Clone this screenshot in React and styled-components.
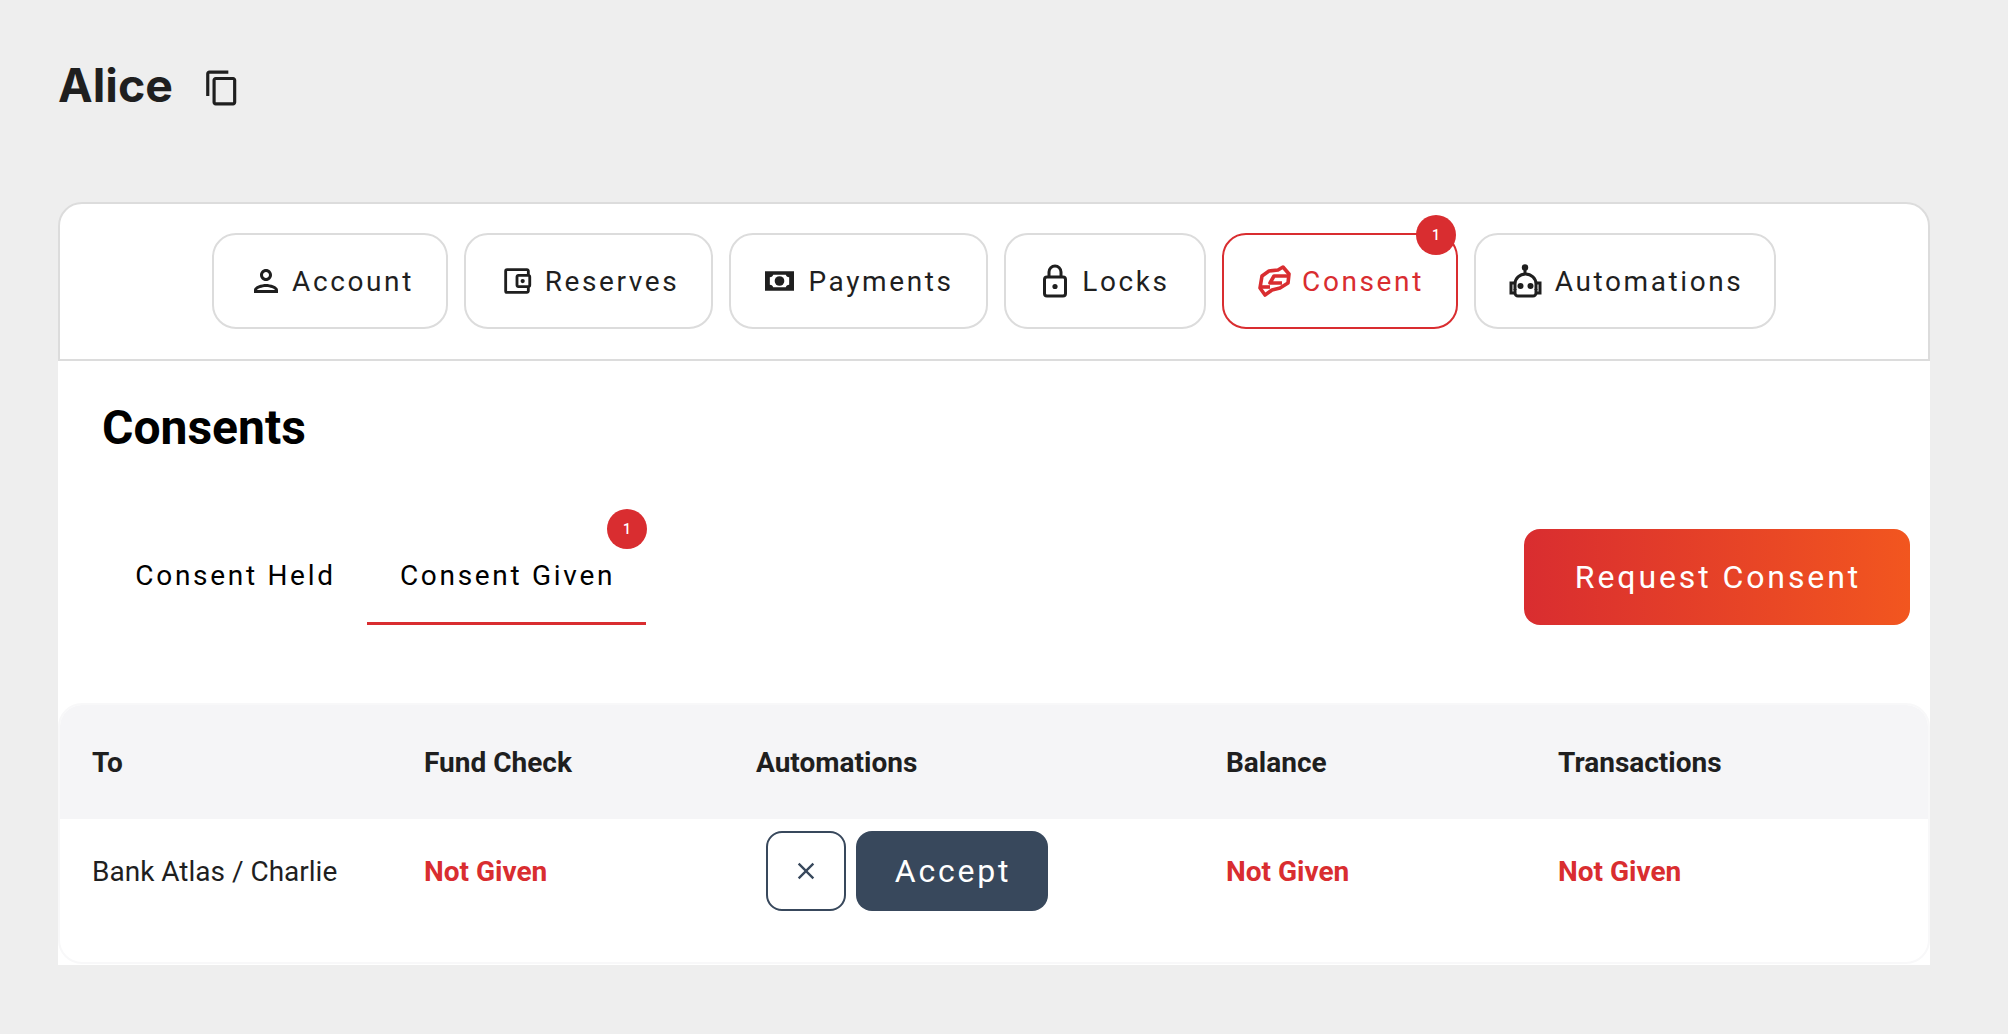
import React from "react";
import styled, { createGlobalStyle } from "styled-components";
import {
  MdOutlineContentCopy,
  MdOutlinePerson,
  MdOutlineAccountBalanceWallet,
  MdClose,
} from "react-icons/md";

const tabs = [
  { label: "Account", icon: <MdOutlinePerson size={36} />, width: 236, gap: 8 },
  { label: "Reserves", icon: <MdOutlineAccountBalanceWallet size={34} />, width: 249, gap: 11 },
  { label: "Payments", icon: <MoneyIcon />, width: 259, gap: 14 },
  { label: "Locks", icon: <LockIcon />, width: 202, gap: 14 },
  { label: "Consent", icon: <HandshakeIcon />, width: 236, gap: 11, active: true, badge: 1 },
  { label: "Automations", icon: <RobotIcon />, width: 302, gap: 12 },
];

function MoneyIcon() {
  return (
    <svg width="29" height="20" viewBox="0 0 30 20">
      <path
        fillRule="evenodd"
        fill="currentColor"
        d="M0 0h30v20H0z M5 6c2 0 3-1 3.500-2.500h13C22 5 23 6 25 6v8c-2 0-3 1-3.500 2.500h-13C8 15 7 14 5 14z"
      />
      <circle cx="15" cy="10" r="5" fill="currentColor" />
    </svg>
  );
}

function LockIcon() {
  return (
    <svg width="26" height="34" viewBox="0 0 26 34" fill="none" stroke="currentColor" strokeWidth="3">
      <rect x="2.500" y="13" width="21" height="19" rx="2.500" />
      <path d="M7 13V8a6 6 0 0 1 12 0v5" />
      <circle cx="13" cy="22.500" r="2.600" fill="currentColor" stroke="none" />
    </svg>
  );
}

function HandshakeIcon() {
  return (
    <svg
      width="33"
      height="33"
      viewBox="0 0 33 33"
      fill="none"
      stroke="currentColor"
      strokeWidth="3.600"
      strokeLinejoin="round"
    >
      <path d="M25 2l6 7-1 9-8 5-8 2-7 5-5-7 2-12 7-5 9-1z" />
      <path d="M30 11H16l-4 7h12" />
      <path d="M3 22h9" />
    </svg>
  );
}

function RobotIcon() {
  return (
    <svg width="34" height="34" viewBox="0 0 34 34" fill="none" stroke="currentColor" strokeWidth="3">
      <circle cx="16" cy="3.500" r="3.200" fill="currentColor" stroke="none" />
      <path d="M16 5v5" />
      <path d="M6 26v-6a10.500 10 0 0 1 21 0v6" />
      <path d="M6 19H2v10h4 M27 19h4v10h-4" />
      <path d="M6 25v4a3 3 0 0 0 3 3h15a3 3 0 0 0 3-3v-4" />
      <circle cx="11.500" cy="22" r="3" fill="currentColor" stroke="none" />
      <circle cx="21.500" cy="22" r="3" fill="currentColor" stroke="none" />
    </svg>
  );
}

function App() {
  return (
    <>
      <GlobalStyle />
      <Page>
        <TitleRow>
          <Title>Alice</Title>
          <CopyIcon size={38} />
        </TitleRow>
        <Card>
          <TabBar>
            {tabs.map((tab) => (
              <TabButton key={tab.label} $active={tab.active} $width={tab.width} $gap={tab.gap}>
                {tab.icon}
                {tab.label}
                {tab.badge && <TabBadge>{tab.badge}</TabBadge>}
              </TabButton>
            ))}
          </TabBar>
          <Content>
            <Heading>Consents</Heading>
            <Toolbar>
              <SubTabs>
                <SubTab $width={265}>Consent Held</SubTab>
                <SubTab $width={279} $active>
                  Consent Given
                  <SubTabBadge>1</SubTabBadge>
                </SubTab>
              </SubTabs>
              <RequestButton>Request Consent</RequestButton>
            </Toolbar>
            <Table>
              <HeadRow>
                <div>To</div>
                <div>Fund Check</div>
                <div>Automations</div>
                <div>Balance</div>
                <div>Transactions</div>
              </HeadRow>
              <BodyRow>
                <div>Bank Atlas / Charlie</div>
                <NotGiven>Not Given</NotGiven>
                <Actions>
                  <CloseButton>
                    <MdClose size={28} />
                  </CloseButton>
                  <AcceptButton>Accept</AcceptButton>
                </Actions>
                <NotGiven>Not Given</NotGiven>
                <NotGiven>Not Given</NotGiven>
              </BodyRow>
            </Table>
          </Content>
        </Card>
      </Page>
    </>
  );
}

export default App;

const GlobalStyle = createGlobalStyle`
  * {
    box-sizing: border-box;
  }
  body {
    margin: 0;
    background: #eeeeee;
    font-family: Roboto, sans-serif;
  }
`;

const Page = styled.div`
  width: 2008px;
  height: 1034px;
  padding: 52px 78px 0 58px;
`;

const TitleRow = styled.div`
  display: flex;
  align-items: center;
  gap: 30px;
  height: 66px;
  color: #1f1f1f;
  margin-bottom: 84px;
`;

const Title = styled.h1`
  margin: 0;
  font-family: Inter, sans-serif;
  font-size: 46.500px;
  font-weight: 700;
  line-height: 66px;
`;

const CopyIcon = styled(MdOutlineContentCopy)`
  margin-top: 6px;
`;

const Card = styled.div`
  width: 1872px;
`;

const TabBar = styled.div`
  display: flex;
  justify-content: center;
  gap: 16px;
  height: 159px;
  padding-top: 29px;
  background: #fff;
  border: 2px solid #dcdcdc;
  border-radius: 24px 24px 0 0;
`;

const TabButton = styled.div`
  position: relative;
  display: flex;
  align-items: center;
  justify-content: center;
  gap: ${(p) => p.$gap}px;
  flex: none;
  width: ${(p) => p.$width}px;
  height: 96px;
  padding-left: 2px;
  border: 2px solid ${(p) => (p.$active ? "#d92d30" : "#dcdcdc")};
  border-radius: 24px;
  color: ${(p) => (p.$active ? "#d92d30" : "#1f1f1f")};
  font-size: 28px;
  letter-spacing: 2.600px;
`;

const TabBadge = styled.span`
  position: absolute;
  top: -20px;
  right: 0;
  display: flex;
  align-items: center;
  justify-content: center;
  width: 40px;
  height: 40px;
  border-radius: 50%;
  background: #d92d30;
  color: #fff;
  font-size: 14px;
  font-weight: 500;
  letter-spacing: 0;
`;

const Content = styled.div`
  height: 604px;
  background: #fff;
  padding-top: 40px;
`;

const Heading = styled.h2`
  margin: 0 0 0 44px;
  font-size: 48px;
  font-weight: 700;
  line-height: 54px;
  color: #000;
`;

const Toolbar = styled.div`
  display: flex;
  justify-content: space-between;
  align-items: flex-end;
  height: 96px;
  margin-top: 74px;
  padding: 0 20px 0 44px;
`;

const SubTabs = styled.div`
  display: flex;
  height: 96px;
  margin-right: auto;
`;

const SubTab = styled.div`
  position: relative;
  display: flex;
  align-items: center;
  justify-content: center;
  width: ${(p) => p.$width}px;
  height: 96px;
  padding-left: 2px;
  color: #000;
  font-size: 28px;
  letter-spacing: 2.700px;
  border-bottom: 3px solid ${(p) => (p.$active ? "#d92d30" : "transparent")};
`;

const SubTabBadge = styled.span`
  position: absolute;
  top: -20px;
  right: -1px;
  display: flex;
  align-items: center;
  justify-content: center;
  width: 40px;
  height: 40px;
  border-radius: 50%;
  background: #d92d30;
  color: #fff;
  font-size: 14px;
  font-weight: 500;
  letter-spacing: 0;
`;

const RequestButton = styled.button`
  width: 386px;
  height: 96px;
  padding: 0 0 0 2px;
  border: 0;
  border-radius: 16px;
  background: linear-gradient(90deg, #d92d30, #f2561f);
  color: #fff;
  font-family: Roboto, sans-serif;
  font-size: 32px;
  letter-spacing: 2.900px;
`;

const Table = styled.div`
  margin-top: 78px;
  height: 261px;
  background: #fff;
  border: 2px solid #f8f8f9;
  border-radius: 24px;
  overflow: hidden;
`;

const columns = "332px 332px 470px 332px 1fr";

const HeadRow = styled.div`
  display: grid;
  grid-template-columns: ${columns};
  align-items: center;
  height: 114px;
  padding-left: 32px;
  background: #f5f5f7;
  color: #1f1f1f;
  font-size: 28px;
  font-weight: 700;
`;

const BodyRow = styled.div`
  display: grid;
  grid-template-columns: ${columns};
  align-items: center;
  height: 104px;
  padding-left: 32px;
  color: #1f1f1f;
  font-size: 28px;
`;

const NotGiven = styled.div`
  color: #d92d30;
  font-weight: 700;
`;

const Actions = styled.div`
  display: flex;
  gap: 10px;
  margin-left: 10px;
`;

const CloseButton = styled.button`
  display: flex;
  align-items: center;
  justify-content: center;
  width: 80px;
  height: 80px;
  padding: 0;
  background: #fff;
  border: 2px solid #38485c;
  border-radius: 16px;
  color: #38485c;
`;

const AcceptButton = styled.button`
  width: 192px;
  height: 80px;
  padding: 0 0 0 2px;
  border: 0;
  border-radius: 16px;
  background: #38485c;
  color: #fff;
  font-family: Roboto, sans-serif;
  font-size: 32px;
  letter-spacing: 2.800px;
`;
